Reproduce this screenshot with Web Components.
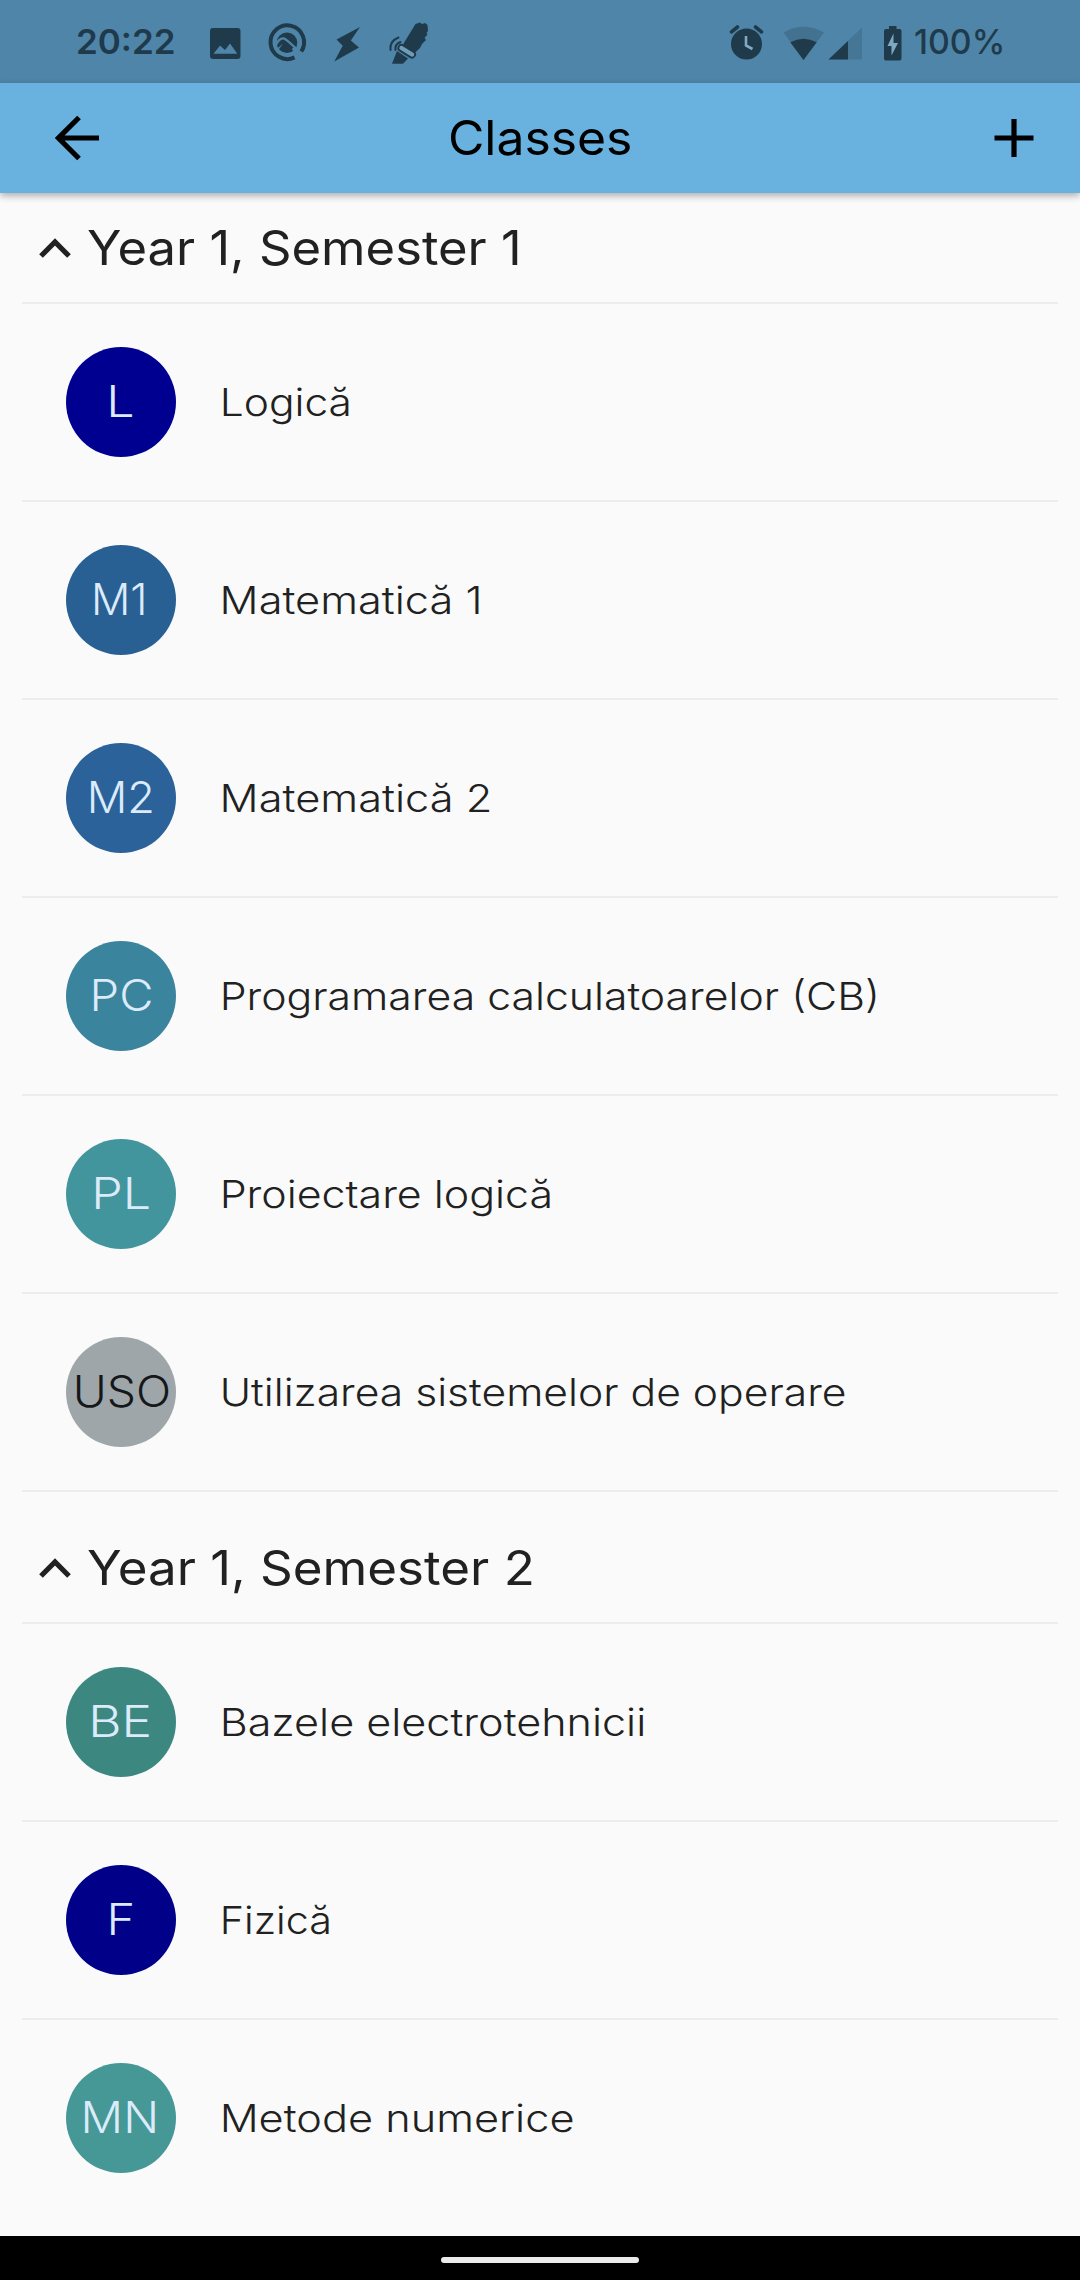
<!DOCTYPE html>
<html lang="en">
<head>
<meta charset="utf-8">
<title>Classes</title>
<style>
html,body{margin:0;background:#fafafa}
body{font-family:Inter,"Noto Sans",sans-serif;color:#212121}
</style>
</head>
<body>
<classes-screen></classes-screen>
<script>
const define=(name,html,setup)=>customElements.define(name,class extends HTMLElement{
  connectedCallback(){
    if(this.shadowRoot)return;
    const root=this.attachShadow({mode:'open'});
    const t=document.createElement('template');
    t.innerHTML=html;
    root.append(t.content.cloneNode(true));
    if(setup)setup(this,root);
  }
});

// A single line whose visible glyphs span exactly `w` pixels.
const pen=document.createElement('canvas').getContext('2d');
define('fit-text',`<style>
:host{display:block;flex:none;white-space:nowrap}
span{display:inline-block;transform-origin:0 50%}
</style><span></span>`,(el,root)=>{
  const span=root.querySelector('span'),text=el.getAttribute('text');
  const size=el.getAttribute('size'),weight=el.getAttribute('weight')||400,w=+el.getAttribute('w');
  span.textContent=text;
  el.style.cssText+=`;width:${w}px;font-size:${size}px;font-weight:${weight};line-height:${Math.ceil(size*1.3)}px`;
  pen.font=`${weight} ${size}px Inter`;
  const m=pen.measureText(text);
  const k=w/(m.actualBoundingBoxRight+m.actualBoundingBoxLeft);
  span.style.transform=`translateX(${m.actualBoundingBoxLeft*k}px) scaleX(${k})`;
});

define('status-bar',`<style>
:host{display:flex;justify-content:space-between;align-items:center;height:83px;box-sizing:border-box;padding:0 78px;background:#4f85a8;color:#1f3a4b}
div{display:flex;align-items:center;height:83px}
svg{display:block;flex:none;fill:currentColor}
</style>
<div>
<fit-text text="20:22" size="34.5" weight="600" w="96"></fit-text>
<svg style="margin-left:34px" width="36" height="83" viewBox="208 0 36 83"><path fill-rule="evenodd" d="M213 28H237.500Q240.500 28 240.500 31V56Q240.500 59 237.500 59H213Q210 59 210 56V31Q210 28 213 28ZM213.500 53.700H237.300L230 43.500L225 50L220 45.500Z"/></svg>
<svg style="margin-left:20px" width="46" height="83" viewBox="264 0 46 83"><path d="M294.500 57.400A16.800 16.800 0 1 1 301.300 51.500" fill="none" stroke="currentColor" stroke-width="4"/><circle cx="287" cy="42.800" r="10.300"/><path d="M275 47Q279 37.500 284 38.500Q288 40.500 299 51.500" fill="none" stroke="#4f85a8" stroke-width="2.400"/><path d="M275 48L278.500 47.500L283 43.500L277 52Z" fill="#4f85a8"/><path d="M293 48L298.500 54.500" stroke="#4f85a8" stroke-width="3.400"/></svg>
<svg style="margin-left:24px" width="28" height="83" viewBox="334 0 28 83"><path d="M360 27L336.500 39.500L342.700 45.800L334.300 61.500L359 47.600L350.800 40.500Z"/></svg>
<svg style="margin-left:24px" width="46" height="83" viewBox="386 0 46 83"><path d="M415.500 24L420 22.500L422 24L425 23L427.500 25L428 31L426.500 33L427.500 34.500L424.500 38L426 40L422 44L420 48L414.500 53L403 44.500Z"/><path d="M397 51L408 58.500L403 63.800H392Z"/><path d="M401.500 48L412 54.500" stroke="currentColor" stroke-width="8" stroke-linecap="round"/><path d="M401.500 48L412 54.500" stroke="#6f9db9" stroke-width="4.400" stroke-linecap="round"/><path d="M398.500 37.500Q389.500 41 390.500 50M400.500 42Q394.500 44.500 395.500 50" fill="none" stroke="currentColor" stroke-width="2" stroke-linecap="round"/></svg>
</div>
<div>
<svg width="36" height="83" viewBox="729 0 36 83"><circle cx="746.500" cy="44" r="15.500"/><path d="M731.500 31.800L737.500 27M761.500 31.800L755.500 27" stroke="currentColor" stroke-width="3.600" stroke-linecap="round"/><path d="M746 36V45.500L752.500 49" fill="none" stroke="#83a9c2" stroke-width="2.600"/></svg>
<svg style="margin-left:17px" width="44" height="83" viewBox="782 0 44 83"><path opacity=".25" d="M783.500 32.500Q803.500 21 824 32.500L803.500 60Z"/><path d="M790.300 42.300Q803.500 35 816.700 42.300L803.500 60Z"/></svg>
<svg style="margin-left:1px" width="36" height="83" viewBox="827 0 36 83"><path opacity=".2" d="M862 27.500V59.500H828.500Z"/><path d="M848 40.900V59.500H828.500Z"/></svg>
<svg style="margin-left:19px" width="20" height="83" viewBox="882 0 20 83"><path d="M889 26H896.500V29H899.500Q901.500 29 901.500 31V58.500Q901.500 60.500 899.500 60.500H886Q884 60.500 884 58.500V31Q884 29 886 29H889Z"/><path fill="#7fa9c3" d="M893.500 33.500L887.500 46H891.500V55.500L898 43H893.500Z"/></svg>
<fit-text style="margin-left:13px" text="100%" size="34.500" weight="540" w="87"></fit-text>
</div>`);

define('app-bar',`<style>
:host{display:grid;grid-template-columns:1fr auto 1fr;align-items:center;height:110px;box-sizing:border-box;padding:0 46px 0 55px;background:#69b1de;color:#000;box-shadow:0 3px 7px rgba(0,0,0,.3);position:relative}
svg{display:block;fill:none;stroke:#000}
svg:last-child{justify-self:end}
fit-text{margin:0 9px 2px 0;translate:-0px}
</style>
<svg width="46" height="46" viewBox="55 115 46 46"><path d="M99 138H59M79 117.500L58.500 138L79 158.500" stroke-width="5.200"/></svg>
<fit-text text="Classes" size="48" weight="430" w="180"></fit-text>
<svg width="40" height="40" viewBox="994 118 40 40"><path d="M994.500 138H1033.500M1014 119V157" stroke-width="5.200"/></svg>`);

define('class-avatar',`<style>
:host{display:flex;align-items:center;flex:none;width:110px;height:110px;border-radius:50%;box-sizing:border-box;padding-bottom:3px}
</style><slot></slot>`);

define('class-row',`<style>
:host{display:flex;align-items:center;gap:47px;height:198px;margin:0 22px;padding-left:44px;box-sizing:border-box;border-bottom:2px solid #ececec}
:host([last]){border-color:transparent}
</style><class-avatar><fit-text size="43" weight="300"></fit-text></class-avatar>
<fit-text class="name" size="38.5" weight="300"></fit-text>`,(el,root)=>{
  const d=JSON.parse(el.dataset.row),a=root.querySelector('class-avatar'),i=root.querySelector('class-avatar fit-text'),n=root.querySelector('.name');
  a.style.background=d.bg;
  a.style.color=d.dark?'#14181a':'#dcebfa';
  const fill=(t,text,w)=>{const c=document.createElement('fit-text');
    for(const at of t.attributes)c.setAttribute(at.name,at.value);
    c.setAttribute('text',text);c.setAttribute('w',w);t.replaceWith(c);return c};
  fill(i,d.code,d.cw).style.marginLeft=d.cx-66+'px';
  fill(n,d.name,d.w);
});

define('semester-section',`<style>
:host{display:block}
header{display:flex;align-items:center;gap:15px;height:110px;margin:0 22px;padding-left:16px;box-sizing:border-box;border-bottom:2px solid #ececec}
svg{display:block;flex:none}
</style><header><svg width="35" height="24" viewBox="0 0 35 24"><path d="M3 20L17 6L31 20" fill="none" stroke="#212121" stroke-width="5.200"/></svg></header><slot></slot>`,(el,root)=>{
  const t=document.createElement('fit-text');
  t.setAttribute('text',el.getAttribute('heading'));t.setAttribute('size',47.7);t.setAttribute('weight',430);t.setAttribute('w',el.getAttribute('w'));
  root.querySelector('header').append(t);
});

define('nav-handle',`<style>
:host{display:flex;justify-content:center;align-items:center;height:44px;background:#000;padding-top:4px;box-sizing:border-box;position:relative}
i{width:198px;height:6px;border-radius:3px;background:#ebebeb}
</style><i></i>`);

const terms=[
 {heading:'Year 1, Semester 1',w:430,rows:[
  {code:'L',cx:111.3,cw:21,bg:'#000090',name:'Logică',w:125.5},
  {code:'M1',cx:95,cw:48.500,bg:'#286094',name:'Matematică 1',w:256},
  {code:'M2',cx:90.5,cw:61.5,bg:'#2a6299',name:'Matematică 2',w:266.5},
  {code:'PC',cx:94,cw:57,bg:'#3b849e',name:'Programarea calculatoarelor (CB)',w:653},
  {code:'PL',cx:96.2,cw:52.500,bg:'#43959d',name:'Proiectare logică',w:326.5},
  {code:'USO',cx:75.5,cw:92.3,bg:'#9ea6a9',dark:1,name:'Utilizarea sistemelor de operare',w:622}]},
 {heading:'Year 1, Semester 2',w:443.500,rows:[
  {code:'BE',cx:93.300,cw:56,bg:'#3c8881',name:'Bazele electrotehnicii',w:421},
  {code:'F',cx:110.7,cw:21.500,bg:'#000088',name:'Fizică',w:105.500},
  {code:'MN',cx:85,cw:70,bg:'#459896',name:'Metode numerice',w:350}]}];

define('classes-screen',`<style>
:host{display:flex;flex-direction:column;width:1080px;height:2280px;overflow:hidden;background:#fafafa}
status-bar,app-bar,nav-handle{flex:none}
main{flex:1;min-height:0;display:flex;flex-direction:column;gap:22px;overflow:hidden;padding-top:1px}
semester-section{flex:none}
</style><status-bar></status-bar><app-bar></app-bar><main></main><nav-handle></nav-handle>`,(el,root)=>{
  const main=root.querySelector('main');
  terms.forEach((t,ti)=>{
    const s=document.createElement('semester-section');
    s.setAttribute('heading',t.heading);s.setAttribute('w',t.w);
    t.rows.forEach((r,i)=>{
      const c=document.createElement('class-row');c.dataset.row=JSON.stringify(r);
      if(ti===terms.length-1&&i===t.rows.length-1)c.setAttribute('last','');
      s.append(c);
    });
    main.append(s);
  });
});
</script>
</body>
</html>
